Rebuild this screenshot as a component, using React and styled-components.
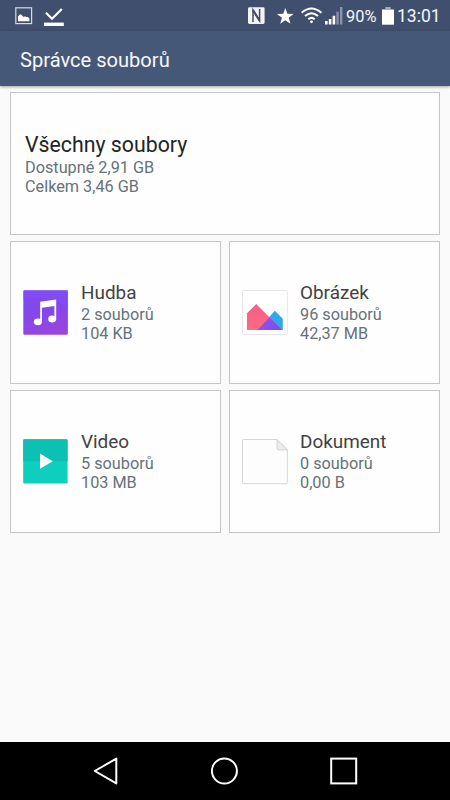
import styled, { createGlobalStyle } from "styled-components";


const files = [
    { name: 'Hudba', count: '2 souborů', size: '104 KB', icon: <MusicIcon /> },
    { name: 'Obrázek', count: '96 souborů', size: '42,37 MB', icon: <ImageIcon /> },
    { name: 'Video', count: '5 souborů', size: '103 MB', icon: <VideoIcon /> },
    { name: 'Dokument', count: '0 souborů', size: '0,00 B', icon: <DocumentIcon /> },
];

function MusicIcon() {
    return(
        <svg width="46" height="46" viewBox="0 0 46 46">
            <defs>
                <linearGradient id="music" x1="0.2" y1="0" x2="0.5" y2="1">
                    <stop offset="0" stopColor="#7a4cf2" />
                    <stop offset="0.5" stopColor="#8447ea" />
                    <stop offset="1" stopColor="#9a45dd" />
                </linearGradient>
            </defs>
            <rect x="0.3" y="0.2" width="44.6" height="44.6" rx="1.2" fill="url(#music)" />
            <path d="M0.3 9 Q20 4 44.9 17 V1.4 Q44.9 0.2 43.7 0.2 H1.5 Q0.3 0.2 0.3 1.4 Z" fill="#8a4df8" opacity="0.45" />
            <path d="M17.2 11.7 L33.2 9.4 V29.2 H31.4 V16 L19 17.8 V32 H17.2 Z" fill="#fff" />
            <ellipse cx="14.9" cy="31.8" rx="4.1" ry="3.4" fill="#fff" />
            <ellipse cx="29.2" cy="29" rx="4" ry="3.4" fill="#fff" />
        </svg>
    );
}

function ImageIcon() {
    return(
        <svg width="46" height="46" viewBox="0 0 46 46">
            <defs>
                <linearGradient id="pink" x1="0" y1="0" x2="0" y2="1">
                    <stop offset="0" stopColor="#f45f86" />
                    <stop offset="1" stopColor="#ff6b83" />
                </linearGradient>
                <linearGradient id="violet" x1="0" y1="0" x2="1" y2="0.6">
                    <stop offset="0" stopColor="#a052e8" />
                    <stop offset="1" stopColor="#7650ee" />
                </linearGradient>
            </defs>
            <rect x="0.5" y="0.5" width="44.8" height="44" rx="1" fill="#fff" stroke="#e7e7e7" />
            <path d="M32.8 20.8 L40.8 28.7 V40 H15.5 Z" fill="#31a8ee" />
            <path d="M5 23.2 L14.2 14 L40.2 40 H5 Z" fill="url(#pink)" />
            <path d="M27.5 27.3 L40.2 40 H15.5 Z" fill="url(#violet)" />
        </svg>
    );
}

function VideoIcon() {
    return(
        <svg width="46" height="46" viewBox="0 0 46 46">
            <rect x="0.2" y="0.2" width="44.4" height="44.2" rx="1.2" fill="#0ccfbd" />
            <path d="M0.2 22.3 V1.4 Q0.2 0.2 1.4 0.2 H43.4 Q44.6 0.2 44.6 1.4 V22.3 Z" fill="#0cc1b3" />
            <path d="M17 14.6 L29.8 22.2 L17 29.8 Z" fill="#fff" />
        </svg>
    );
}

function DocumentIcon() {
    return(
        <svg width="46" height="46" viewBox="0 0 46 46">
            <path d="M1.5 0.5 H35 L45.3 10.8 V43.5 Q45.3 44.7 44.1 44.7 H1.7 Q0.5 44.7 0.5 43.5 V1.5 Q0.5 0.5 1.5 0.5 Z" fill="#fdfdfd" stroke="#d6d6d6" />
            <path d="M35 0.5 V9.6 Q35 10.8 36.2 10.8 H45.3 Z" fill="#ececec" stroke="#d2d2d2" />
        </svg>
    );
}

const StatusBar = () => {
    return(
        <StatusContainer>
            <StatusIcon $left={15} width="18" height="18" viewBox="0 0 18 18">
                <rect x="0.8" y="0.8" width="15.8" height="15.8" fill="none" stroke="#d5dbe6" strokeWidth="1.2" />
                <path d="M3 14.2 V9.6 L4.4 7.8 Q5.4 6.6 6.5 8 L8.6 10 L10 9.2 L11.3 10.3 L12.6 9.8 L14.4 11.4 V14.2 Z" fill="#fff" />
            </StatusIcon>
            <StatusIcon $left={11} width="20" height="20" viewBox="0 0 20 20">
                <path d="M2 5.8 L8 11.8 L17.8 2" fill="none" stroke="#fff" strokeWidth="2.2" />
                <rect x="0" y="15.6" width="19.8" height="3.4" fill="#fff" />
            </StatusIcon>
            <Spacer />
            <StatusIcon width="18" height="18" viewBox="0 0 18 18">
                <rect x="0" y="0.3" width="16.6" height="16.6" rx="1.4" fill="#f3f4f8" />
                <path d="M5 15 V3 L11.6 13.8 V2" fill="none" stroke="#414d6a" strokeWidth="1.5" />
                <path d="M5 3 L11.6 13.8" fill="none" stroke="#414d6a" strokeWidth="2" />
            </StatusIcon>
            <StatusIcon $left={11} width="17" height="18" viewBox="0 0 17 18">
                <path d="M8.3 0.9 L10.4 6.8 L16.6 7 L11.7 10.7 L13.5 16.8 L8.3 13.2 L3.2 16.8 L5 10.7 L0 7 L6.2 6.8 Z" fill="#fff" />
            </StatusIcon>
            <StatusIcon $left={7} width="22" height="18" viewBox="0 0 22 18">
                <g fill="none" stroke="#fff" strokeWidth="2">
                    <path d="M0.6 5.8 Q10.5 -2.8 20.4 5.8" />
                    <path d="M4 9.1 Q10.5 3.4 17 9.1" />
                    <path d="M7.3 12.2 Q10.5 9.5 13.7 12.2" />
                </g>
                <circle cx="10.5" cy="14.8" r="1.4" fill="#fff" />
            </StatusIcon>
            <StatusIcon $left={2} width="19" height="18" viewBox="0 0 19 18">
                <path d="M0 14 H2.6 V17.5 H0 Z M3.8 12 H6.4 V17.5 H3.8 Z M7.6 8.7 H10.2 V17.5 H7.6 Z" fill="#fff" />
                <path d="M11.4 4.7 H13.7 V17.5 H11.4 Z M15 0 H17.4 V17.5 H15 Z" fill="#8b93a8" />
            </StatusIcon>
            <Percent>90%</Percent>
            <StatusIcon width="12" height="18" viewBox="0 0 12 18">
                <path d="M3.4 0 H8.6 V2 H12 V3.2 H0 V2 H3.4 Z" fill="#a4abbc" />
                <rect x="0" y="3" width="12" height="14.7" fill="#fff" />
            </StatusIcon>
            <Clock>13:01</Clock>
        </StatusContainer>
    );
};

const FileCard = (props) => {
    return(
        <Card>
            <IconContainer>{props.icon}</IconContainer>
            <CardText>
                <CardName>{props.name}</CardName>
                <CardInfo>{props.count}</CardInfo>
                <CardInfo>{props.size}</CardInfo>
            </CardText>
        </Card>
    );
};

const App = () => {
    return(
        <Screen>
            <GlobalStyle />
            <StatusBar />
            <Header>
                <Title>Správce souborů</Title>
            </Header>
            <Content>
                <AllFilesCard>
                    <AllFilesName>Všechny soubory</AllFilesName>
                    <CardInfo>Dostupné 2,91 GB</CardInfo>
                    <CardInfo>Celkem 3,46 GB</CardInfo>
                </AllFilesCard>
                <CardsContainer>
                    {files.map((file) => <FileCard key={file.name} {...file} />)}
                </CardsContainer>
            </Content>
            <NavBar>
                <svg width="26" height="30" viewBox="0 0 26 30">
                    <path d="M1.8 15 L23.3 2.6 V27.4 Z" fill="none" stroke="#fff" strokeWidth="2" strokeLinejoin="round" />
                </svg>
                <svg width="28" height="30" viewBox="0 0 28 30">
                    <circle cx="13.4" cy="15" r="12.5" fill="none" stroke="#fff" strokeWidth="2" />
                </svg>
                <svg width="28" height="30" viewBox="0 0 28 30">
                    <rect x="1.2" y="2.6" width="25" height="24.8" fill="none" stroke="#fff" strokeWidth="2" />
                </svg>
            </NavBar>
        </Screen>
    );
};


const GlobalStyle = createGlobalStyle`
    * {
        box-sizing: border-box;
    }

    body {
        margin: 0;
    }

    h1, h2, p {
        margin: 0;
        font-weight: 400;
    }
`;

const Screen = styled.div`
    display: flex;
    flex-direction: column;
    width: 450px;
    height: 800px;
    overflow: hidden;
    background: #fafafa;
    font-family: Roboto, sans-serif;
`;

const StatusContainer = styled.div`
    display: flex;
    align-items: flex-start;
    height: 31px;
    padding: 7px 10px 0px 0px;
    background: #414f6e;
    color: #f4f6fa;
    flex-shrink: 0;
`;

const StatusIcon = styled.svg`
    flex-shrink: 0;
    margin-left: ${(props) => props.$left || 0}px;
`;

const Spacer = styled.div`
    flex: 1;
`;

const Percent = styled.span`
    width: 38px;
    padding-left: 2px;
    font-size: 16.4px;
    line-height: 19px;
`;

const Clock = styled.span`
    width: 46px;
    padding-left: 3px;
    font-size: 17.5px;
    line-height: 19px;
    white-space: nowrap;
`;

const Header = styled.div`
    display: flex;
    align-items: center;
    height: 55px;
    padding: 2px 20px 0px;
    background: #465878;
    box-shadow: 0 1px 3px rgb(0 0 0 / 35%);
    flex-shrink: 0;
`;

const Title = styled.h1`
    color: #f6f8fb;
    font-size: 20.1px;
    line-height: 24px;
`;

const Content = styled.div`
    display: flex;
    flex-direction: column;
    flex: 1;
    gap: 6px;
    padding: 6px 10px;
`;

const CardsContainer = styled.div`
    display: grid;
    grid-template-columns: 211px 211px;
    gap: 6px 8px;
`;

const Card = styled.div`
    display: flex;
    align-items: flex-start;
    height: 143px;
    border: 1px solid #c6c6c8;
    background: #fefefe;
`;

const AllFilesCard = styled(Card)`
    flex-direction: column;
    padding: 38px 14px 0px;
`;

const IconContainer = styled.div`
    display: flex;
    width: 46px;
    height: 46px;
    margin: 48px 12px 0px;
`;

const CardText = styled.div`
    display: flex;
    flex-direction: column;
    padding-top: 39px;
`;

const AllFilesName = styled.h2`
    color: #242424;
    font-size: 21.3px;
    line-height: 27px;
`;

const CardName = styled.h2`
    color: #424242;
    font-size: 18.9px;
    line-height: 24px;
`;

const CardInfo = styled.p`
    color: #66717a;
    font-size: 16.25px;
    line-height: 19px;
    white-space: nowrap;
`;

const NavBar = styled.div`
    display: flex;
    align-items: center;
    justify-content: space-between;
    height: 58px;
    padding: 0px 92px 0px 93px;
    background: #000;
    flex-shrink: 0;
`;





export default App;
